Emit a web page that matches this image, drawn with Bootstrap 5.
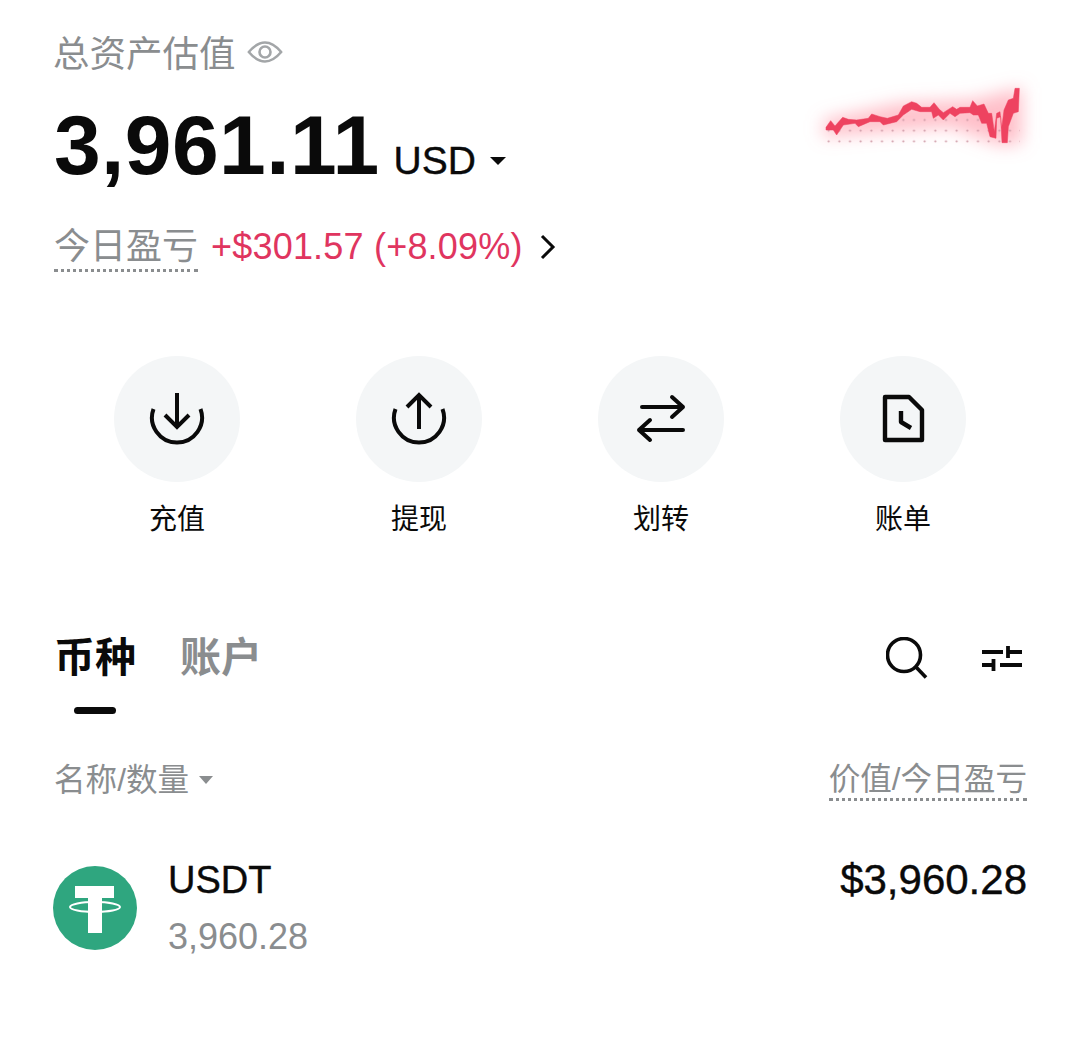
<!DOCTYPE html>
<html lang="zh">
  <head>
    <meta charset="utf-8" />
    <title>总资产估值</title>
    <link href="https://cdn.jsdelivr.net/npm/bootstrap@5.3.2/dist/css/bootstrap.min.css" rel="stylesheet" />
    <style>
      body {
        font-family: "Liberation Sans", "Noto Sans CJK SC", sans-serif;
        background: #fff;
        color: #0a0a0a;
      }
      .asset-page { padding: 33px 53px 0 54px; }
      .muted-text { color: #8a8d8f; }
      .asset-title { font-size: 36.5px; line-height: 44px; margin-left: -1px; }
      .eye-icon { margin: 0 0 6px 11px; }
      .asset-amount { font-size: 84px; line-height: 90px; font-weight: 700; margin-top: 23px; letter-spacing: .4px; }
      .asset-unit { font-size: 39px; margin-left: 14px; font-weight: 400; letter-spacing: 0; -webkit-text-stroke: .4px #0a0a0a; }
      .caret-down { width: 0; height: 0; border: 8px solid transparent; border-top: 8px solid #0a0a0a; border-bottom: 0; margin-left: 14px; }
      .pnl-line { margin-top: 19px; height: 50px; }
      .dotted-label { font-size: 36px; line-height: 44px; border-bottom: 3px dotted #8a8d8f; }
      .pnl-value { font-size: 36px; line-height: 44px; color: #e0355f; margin-left: 13px; letter-spacing: .2px; }
      .spark-box { width: 250px; height: 100px; margin: 37px -23px 0 0; }
      .action-row { padding: 0 61px 0 60px; margin-top: 81px; }
      .action-item { width: 126px; }
      .action-circle { width: 126px; height: 126px; border-radius: 50%; background: #f4f6f7; }
      .action-label { font-size: 28px; line-height: 36px; margin-top: 20px; }
      .tab-row { margin-top: 95px; height: 50px; }
      .tab-group { gap: 44px; }
      .tab-text { font-size: 41px; line-height: 50px; font-weight: 700; }
      .tab-bar { width: 42px; height: 7px; border-radius: 4px; background: #0a0a0a; margin: 24px 0 0 20px; }
      .tab-tools { margin-right: 4px; gap: 53px; }
      .column-head { margin-top: 44px; font-size: 31.6px; line-height: 44px; }
      .column-head .dotted-label { font-size: 31.6px; line-height: 38px; }
      .caret-grey { width: 0; height: 0; border: 7px solid transparent; border-top: 8px solid #8a8d8f; border-bottom: 0; margin-left: 10px; }
      .coin-row { margin-top: 55px; }
      .coin-logo { width: 84px; height: 84px; margin: 9px 31px 0 -1px; }
      .coin-name { font-size: 38px; line-height: 46px; -webkit-text-stroke: .4px #0a0a0a; }
      .coin-qty { font-size: 36px; line-height: 44px; margin-top: 12px; }
      .coin-value { font-size: 42px; line-height: 46px; -webkit-text-stroke: .4px #0a0a0a; }
    </style>
  </head>
  <body>
    <div class="asset-page">
      <div class="d-flex justify-content-between align-items-start">
        <div>
          <div class="asset-title muted-text d-flex align-items-center">
            总资产估值
            <svg class="eye-icon" width="36" height="26" viewBox="0 0 36 26" fill="none" stroke="#a3a6a8" stroke-width="2.6">
              <path d="M1.8 13Q18 -6 34.2 13Q18 32 1.8 13Z" stroke-linejoin="round" />
              <circle cx="18" cy="13" r="5.5" />
            </svg>
          </div>
          <div class="d-flex align-items-baseline asset-amount">
            3,961.11
            <span class="asset-unit d-flex align-items-center">USD<span class="caret-down"></span></span>
          </div>
        </div>
        <svg class="spark-box" viewBox="0 0 750 300" fill="none">
          <defs>
            <filter id="glowBlur" x="-30%" y="-60%" width="160%" height="220%">
              <feGaussianBlur stdDeviation="26" />
            </filter>
            <pattern id="dotGrid" width="32" height="32" patternUnits="userSpaceOnUse" x="70" y="134">
              <circle cx="16" cy="16" r="3.2" fill="#cf9aa6" />
            </pattern>
            <clipPath id="underLine">
              <path d="M78 180L100 180L110 195L130 165L165 160L175 170L210 155L240 155L250 165L290 155L310 135L335 118L360 125L395 125L400 145L415 135L430 150L450 130L465 140L480 130L510 128L520 135L535 135L545 160L660 160L660 240L78 240Z" />
            </clipPath>
          </defs>
          <path filter="url(#glowBlur)" fill="#ff8a9c" fill-opacity=".55" d="M70 150L300 100L520 90L640 60L665 50L665 220L600 225L450 170L70 200Z" />
          <rect x="70" y="134" width="600" height="96" fill="url(#dotGrid)" clip-path="url(#underLine)" />
          <path fill="#ee4360" stroke="#ee4360" stroke-width="1.5" stroke-linejoin="round" d="M78 172L92 152L105 168L128 142L145 148L170 150L205 145L215 132L240 140L262 145L295 135L310 108L335 95L350 100L365 112L390 112L402 98L418 118L430 128L458 110L470 118L480 112L510 112L518 92L532 108L552 102L565 130L575 130L583 185L590 130L600 125L605 175L612 120L625 90L640 85L645 55L658 55L655 125L640 130L625 170L622 218L606 218L602 140L590 145L588 205L570 200L560 160L545 160L535 135L520 135L510 128L480 130L465 140L450 130L430 150L415 135L400 145L395 125L360 125L335 118L310 135L290 155L250 165L240 155L210 155L175 170L165 160L130 165L110 195L100 180L78 180Z" />
        </svg>
      </div>

      <div class="pnl-line d-flex align-items-start">
        <span class="dotted-label muted-text">今日盈亏</span>
        <span class="pnl-value">+$301.57 (+8.09%)</span>
        <svg class="ms-3 mt-2" width="18" height="28" viewBox="0 0 18 28" fill="none" stroke="#0a0a0a" stroke-width="3">
          <path d="M3 3L14 14L3 25" />
        </svg>
      </div>

      <div class="action-row d-flex justify-content-between">
        <div class="action-item text-center">
          <div class="action-circle d-flex align-items-center justify-content-center">
            <svg width="60" height="60" viewBox="0 0 60 60" fill="none" stroke="#0a0a0a" stroke-width="4">
              <path d="M6.5 20A25 25 0 1 0 53.5 20" />
              <path d="M30 4V38M18 26L30 38L42 26" />
            </svg>
          </div>
          <div class="action-label">充值</div>
        </div>
        <div class="action-item text-center">
          <div class="action-circle d-flex align-items-center justify-content-center">
            <svg width="60" height="60" viewBox="0 0 60 60" fill="none" stroke="#0a0a0a" stroke-width="4">
              <path d="M6.5 20A25 25 0 1 0 53.5 20" />
              <path d="M30 6V40M18 18L30 6L42 18" />
            </svg>
          </div>
          <div class="action-label">提现</div>
        </div>
        <div class="action-item text-center">
          <div class="action-circle d-flex align-items-center justify-content-center">
            <svg width="60" height="60" viewBox="0 0 60 60" fill="none" stroke="#0a0a0a" stroke-width="4" stroke-linecap="round" stroke-linejoin="round">
              <path d="M11 18H52M41 8L52 18L41 28" />
              <path d="M52 41H8M19 31L8 41L19 51" />
            </svg>
          </div>
          <div class="action-label">划转</div>
        </div>
        <div class="action-item text-center">
          <div class="action-circle d-flex align-items-center justify-content-center">
            <svg width="60" height="60" viewBox="0 0 60 60" fill="none" stroke="#0a0a0a" stroke-width="4.4" stroke-linejoin="round">
              <path d="M12 8H36L49 21V51H12Z" />
              <path d="M28 22V33L38 39" />
            </svg>
          </div>
          <div class="action-label">账单</div>
        </div>
      </div>

      <div class="tab-row d-flex justify-content-between align-items-center">
        <div class="tab-group d-flex">
          <div class="tab-text">币种</div>
          <div class="tab-text muted-text">账户</div>
        </div>
        <div class="tab-tools d-flex align-items-center">
          <svg width="42" height="42" viewBox="0 0 42 42" fill="none" stroke="#0a0a0a" stroke-width="3.6">
            <circle cx="18" cy="18" r="16.5" />
            <path d="M29.5 29.5L40 40.5" />
          </svg>
          <svg width="42" height="34" viewBox="0 0 42 34" fill="none" stroke="#0a0a0a" stroke-width="3.8">
            <path d="M1 11H22M27 11H41M27 5V17" />
            <path d="M1 24H14M12.5 18V30M19 24H41" />
          </svg>
        </div>
      </div>
      <div class="tab-bar"></div>

      <div class="column-head muted-text d-flex justify-content-between align-items-center">
        <div class="d-flex align-items-center">名称/数量<span class="caret-grey"></span></div>
        <span class="dotted-label">价值/今日盈亏</span>
      </div>

      <div class="coin-row d-flex justify-content-between align-items-start">
        <div class="d-flex align-items-start">
          <svg class="coin-logo" viewBox="0 0 84 84">
            <circle cx="42" cy="42" r="42" fill="#2fa67f" />
            <path fill="#fff" d="M22 20H61V32H49V67H35V32H22Z" />
            <ellipse cx="42" cy="41" rx="25" ry="5" fill="none" stroke="#fff" stroke-width="2" />
          </svg>
          <div>
            <div class="coin-name">USDT</div>
            <div class="coin-qty muted-text">3,960.28</div>
          </div>
        </div>
        <div class="coin-value">$3,960.28</div>
      </div>
    </div>
    <script src="https://cdn.jsdelivr.net/npm/bootstrap@5.3.2/dist/js/bootstrap.bundle.min.js"></script>
  </body>
</html>
